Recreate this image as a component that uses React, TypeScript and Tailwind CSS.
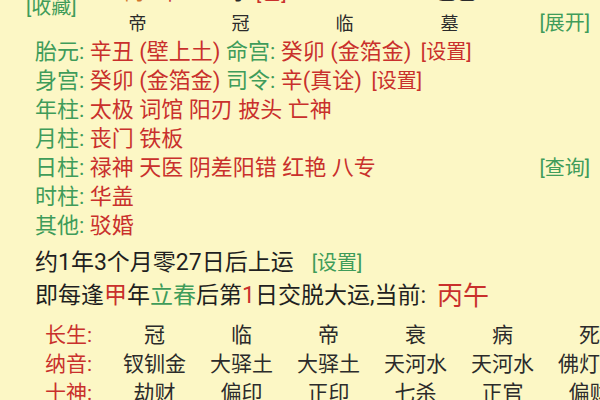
import React from "react";

const G = "text-[#3f9c5a]";
const R = "text-[#c9302c]";

function InfoRow({ label, children }: { label: string; children: React.ReactNode }) {
  return (
    <div className="flex h-[29px] items-center whitespace-nowrap">
      <span className={G}>{label}:&nbsp;</span>
      <span className={R}>{children}</span>
    </div>
  );
}

const table: { label: string; cells: string[] }[] = [
  { label: "长生", cells: ["冠", "临", "帝", "衰", "病", "死"] },
  { label: "纳音", cells: ["钗钏金", "大驿土", "大驿土", "天河水", "天河水", "佛灯火"] },
  { label: "十神", cells: ["劫财", "偏印", "正印", "七杀", "正官", "偏财"] },
];

export default function App() {
  return (
    <div
      className="relative h-[400px] w-[600px] overflow-hidden bg-[#fcf7c5] text-[#2b2b2b]"
      style={{ fontFamily: 'Roboto, "Noto Sans CJK SC", sans-serif' }}
    >
      {/* row above the viewport, only its lower edge shows */}
      <div className="mt-[-19px] flex h-[24px] items-center whitespace-nowrap text-[20px]">
        <span className="ml-[124px] text-[#d0742c]">丙</span>
        <span className="ml-[16px] text-[#c9302c]">午</span>
        <span className="ml-[50px] text-[#2b2b2b]">子</span>
        <span className="ml-[6px] text-[#c9302c]">[己]</span>
        <span className="ml-[150px] text-[#2b2b2b]">乙巳</span>
      </div>
      <span className={`absolute left-[26px] top-[-8px] text-[20px] ${G}`}>[收藏]</span>

      <div className="flex h-[32px] items-center pt-[4px] text-[18px]">
        <div className="ml-[86px] grid grid-cols-[103px_103px_105px_105px] text-center">
          <span>帝</span>
          <span>冠</span>
          <span>临</span>
          <span>墓</span>
        </div>
        <span className={`ml-auto mr-[10px] text-[20px] ${G}`}>[展开]</span>
      </div>

      <div className="pl-[35px] text-[22px]">
        <InfoRow label="胎元">
          辛丑 (壁上土) <span className={G}>命宫: </span>癸卯 (金箔金) <span className="ml-[4px] text-[20px]">[设置]</span>
        </InfoRow>
        <InfoRow label="身宫">
          癸卯 (金箔金) <span className={G}>司令: </span>辛(真诠) <span className="ml-[4px] text-[20px]">[设置]</span>
        </InfoRow>
        <InfoRow label="年柱">太极 词馆 阳刃 披头 亡神</InfoRow>
        <InfoRow label="月柱">丧门 铁板</InfoRow>
        <div className="relative">
          <InfoRow label="日柱">禄神 天医 阴差阳错 红艳 八专</InfoRow>
          <span className={`absolute right-[10px] top-[0px] text-[20px] ${G}`}>[查询]</span>
        </div>
        <InfoRow label="时柱">华盖</InfoRow>
        <InfoRow label="其他">驳婚</InfoRow>

        <div className="mt-[7px] flex h-[32px] items-center whitespace-nowrap text-[23px] text-[#1f1f1f]">
          约1年3个月零27日后上运
          <span className={`ml-[18px] text-[20px] ${G}`}>[设置]</span>
        </div>
        <div className="flex h-[35px] items-center whitespace-nowrap text-[23px] text-[#1f1f1f]">
          即每逢<span className={R}>甲</span>年<span className={G}>立春</span>后第<span className={R}>1</span>日交脱大运,当前:
          <span className={`ml-[11px] text-[26px] ${R}`}>丙午</span>
        </div>
      </div>

      <div className="mt-[6px] text-[21px]">
        {table.map((row) => (
          <div key={row.label} className="grid h-[29px] grid-cols-[111px_repeat(6,87px)] items-center whitespace-nowrap">
            <span className={`pl-[45px] ${R}`}>{row.label}:</span>
            {row.cells.map((c, i) => (
              <span key={i} className="text-center">
                {c}
              </span>
            ))}
          </div>
        ))}
      </div>
    </div>
  );
}
